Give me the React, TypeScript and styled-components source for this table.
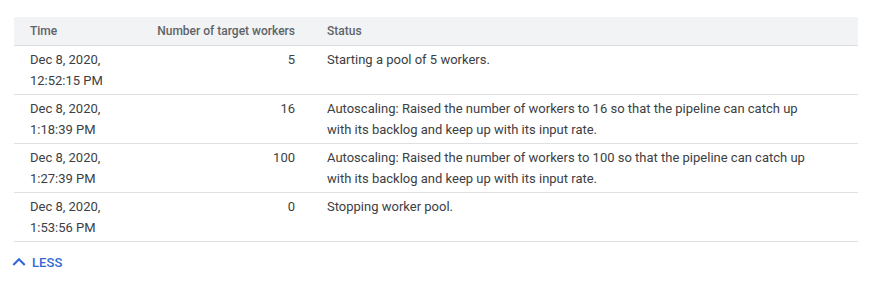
import React from 'react';
import styled, { createGlobalStyle } from 'styled-components';

const GlobalStyle = createGlobalStyle`
  body {
    margin: 0;
    background: #ffffff;
    font-family: Roboto, "Liberation Sans", Arial, sans-serif;
  }
`;

const Page = styled.div`
  padding: 17px 14px 0 14px;
`;

const Table = styled.div`
  display: grid;
  grid-template-columns: 127px 170px 1fr;
`;

const HeadCell = styled.div<{ $align?: 'left' | 'right' }>`
  background: #f1f3f4;
  height: 28px;
  line-height: 28px;
  padding: 0 16px;
  font-size: 12px;
  font-weight: 500;
  color: #5f6368;
  text-align: ${p => p.$align || 'left'};
  border-bottom: 1px solid #dadce0;
`;

const Cell = styled.div<{ $align?: 'left' | 'right'; $wide?: boolean }>`
  box-sizing: border-box;
  height: 49px;
  padding: 3px ${p => (p.$wide ? '48px' : '16px')} 3px 16px;
  font-size: 13px;
  line-height: 21px;
  color: #3c4043;
  text-align: ${p => p.$align || 'left'};
  border-bottom: 1px solid #e0e0e0;
`;

const LessButton = styled.button`
  display: flex;
  align-items: center;
  gap: 0;
  margin-top: 7px;
  margin-left: -8px;
  padding: 0;
  border: none;
  background: none;
  cursor: pointer;
  color: #3367d6;
  font-family: Roboto, "Liberation Sans", Arial, sans-serif;
  font-size: 13px;
  font-weight: 500;
  letter-spacing: 0.1px;
`;

type Event = { date: string; time: string; workers: number; status: string };

const events: Event[] = [
  { date: 'Dec 8, 2020,', time: '12:52:15 PM', workers: 5, status: 'Starting a pool of 5 workers.' },
  {
    date: 'Dec 8, 2020,',
    time: '1:18:39 PM',
    workers: 16,
    status:
      'Autoscaling: Raised the number of workers to 16 so that the pipeline can catch up with its backlog and keep up with its input rate.',
  },
  {
    date: 'Dec 8, 2020,',
    time: '1:27:39 PM',
    workers: 100,
    status:
      'Autoscaling: Raised the number of workers to 100 so that the pipeline can catch up with its backlog and keep up with its input rate.',
  },
  { date: 'Dec 8, 2020,', time: '1:53:56 PM', workers: 0, status: 'Stopping worker pool.' },
];

const ChevronUp = () => (
  <svg width="26" height="26" viewBox="0 0 24 24" fill="currentColor">
    <path d="M7.41 15.41L12 10.83l4.59 4.58L18 14l-6-6-6 6z" />
  </svg>
);

const App: React.FC = () => {
  return (
    <>
      <GlobalStyle />
      <Page>
        <Table>
          <HeadCell>Time</HeadCell>
          <HeadCell $align="right">Number of target workers</HeadCell>
          <HeadCell>Status</HeadCell>
          {events.map((e, i) => (
            <React.Fragment key={i}>
              <Cell>
                {e.date}
                <br />
                {e.time}
              </Cell>
              <Cell $align="right">{e.workers}</Cell>
              <Cell $wide>{e.status}</Cell>
            </React.Fragment>
          ))}
        </Table>
        <LessButton>
          <ChevronUp />
          LESS
        </LessButton>
      </Page>
    </>
  );
};

export default App;
